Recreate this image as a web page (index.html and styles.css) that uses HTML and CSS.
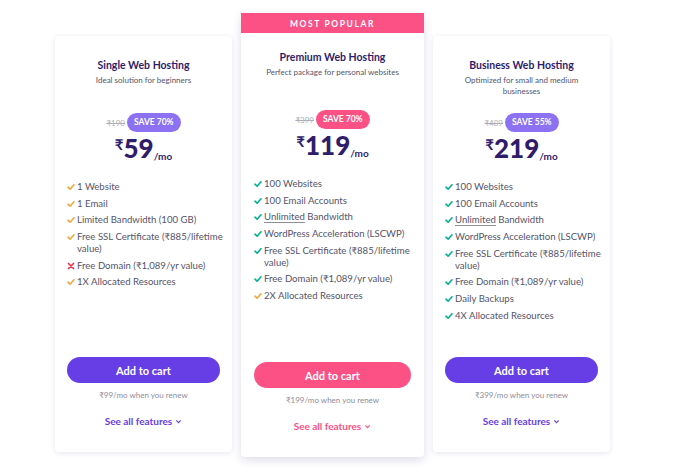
FILE: index.html
```html
<html>

<head>
    <meta charset="utf-8">
    <link rel="stylesheet" href="styles.css">
</head>

<body>
    <div class="plans">

        <!-- single -->
        <div class="plan">
            <div class="plan-head">
                <h3 class="plan-title">Single Web Hosting</h3>
                <p class="plan-tagline">Ideal solution for beginners</p>
            </div>
            <div class="price-box">
                <div class="discount"><s>₹190</s><span class="save">SAVE 70%</span></div>
                <div class="price"><span class="cur">₹</span><span class="amt">59</span><span class="per">/mo</span></div>
            </div>
            <ul class="features">
                <li class="ok-gold"><svg viewBox="0 0 8 8"><path d="M1 4.2 3.1 6.2 7 1.8"/></svg><span>1 Website</span></li>
                <li class="ok-gold"><svg viewBox="0 0 8 8"><path d="M1 4.2 3.1 6.2 7 1.8"/></svg><span>1 Email</span></li>
                <li class="ok-gold"><svg viewBox="0 0 8 8"><path d="M1 4.2 3.1 6.2 7 1.8"/></svg><span>Limited Bandwidth (100 GB)</span></li>
                <li class="ok-gold"><svg viewBox="0 0 8 8"><path d="M1 4.2 3.1 6.2 7 1.8"/></svg><span><span class="nobr">Free SSL Certificate (₹885/lifetime</span> value)</span></li>
                <li class="no"><svg viewBox="0 0 8 8"><path d="M1.5 1.5 6.5 6.5M6.5 1.5 1.5 6.5"/></svg><span>Free Domain (₹1,089/yr value)</span></li>
                <li class="ok-gold"><svg viewBox="0 0 8 8"><path d="M1 4.2 3.1 6.2 7 1.8"/></svg><span>1X Allocated Resources</span></li>
            </ul>
            <div class="plan-foot">
                <button class="cart">Add to cart</button>
                <div class="renew">₹99/mo when you renew</div>
                <a class="see-all">See all features <svg viewBox="0 0 8 8"><path d="M1.5 2.8 4 5.3 6.5 2.8"/></svg></a>
            </div>
        </div>

        <!-- premium -->
        <div class="plan popular">
            <div class="ribbon">MOST POPULAR</div>
            <div class="plan-body">
                <div class="plan-head">
                    <h3 class="plan-title">Premium Web Hosting</h3>
                    <p class="plan-tagline">Perfect package for personal websites</p>
                </div>
                <div class="price-box">
                    <div class="discount"><s>₹399</s><span class="save">SAVE 70%</span></div>
                    <div class="price"><span class="cur">₹</span><span class="amt">119</span><span class="per">/mo</span></div>
                </div>
                <ul class="features">
                    <li class="ok"><svg viewBox="0 0 8 8"><path d="M1 4.2 3.1 6.2 7 1.8"/></svg><span>100 Websites</span></li>
                    <li class="ok"><svg viewBox="0 0 8 8"><path d="M1 4.2 3.1 6.2 7 1.8"/></svg><span>100 Email Accounts</span></li>
                    <li class="ok"><svg viewBox="0 0 8 8"><path d="M1 4.2 3.1 6.2 7 1.8"/></svg><span><u>Unlimited</u> Bandwidth</span></li>
                    <li class="ok"><svg viewBox="0 0 8 8"><path d="M1 4.2 3.1 6.2 7 1.8"/></svg><span>WordPress Acceleration (LSCWP)</span></li>
                    <li class="ok"><svg viewBox="0 0 8 8"><path d="M1 4.2 3.1 6.2 7 1.8"/></svg><span><span class="nobr">Free SSL Certificate (₹885/lifetime</span> value)</span></li>
                    <li class="ok"><svg viewBox="0 0 8 8"><path d="M1 4.2 3.1 6.2 7 1.8"/></svg><span>Free Domain (₹1,089/yr value)</span></li>
                    <li class="ok-gold"><svg viewBox="0 0 8 8"><path d="M1 4.2 3.1 6.2 7 1.8"/></svg><span>2X Allocated Resources</span></li>
                </ul>
                <div class="plan-foot">
                    <button class="cart">Add to cart</button>
                    <div class="renew">₹199/mo when you renew</div>
                    <a class="see-all">See all features <svg viewBox="0 0 8 8"><path d="M1.5 2.8 4 5.3 6.5 2.8"/></svg></a>
                </div>
            </div>
        </div>

        <!-- business -->
        <div class="plan">
            <div class="plan-head">
                <h3 class="plan-title">Business Web Hosting</h3>
                <p class="plan-tagline">Optimized for small and medium businesses</p>
            </div>
            <div class="price-box">
                <div class="discount"><s>₹489</s><span class="save">SAVE 55%</span></div>
                <div class="price"><span class="cur">₹</span><span class="amt">219</span><span class="per">/mo</span></div>
            </div>
            <ul class="features">
                <li class="ok"><svg viewBox="0 0 8 8"><path d="M1 4.2 3.1 6.2 7 1.8"/></svg><span>100 Websites</span></li>
                <li class="ok"><svg viewBox="0 0 8 8"><path d="M1 4.2 3.1 6.2 7 1.8"/></svg><span>100 Email Accounts</span></li>
                <li class="ok"><svg viewBox="0 0 8 8"><path d="M1 4.2 3.1 6.2 7 1.8"/></svg><span><u>Unlimited</u> Bandwidth</span></li>
                <li class="ok"><svg viewBox="0 0 8 8"><path d="M1 4.2 3.1 6.2 7 1.8"/></svg><span>WordPress Acceleration (LSCWP)</span></li>
                <li class="ok"><svg viewBox="0 0 8 8"><path d="M1 4.2 3.1 6.2 7 1.8"/></svg><span><span class="nobr">Free SSL Certificate (₹885/lifetime</span> value)</span></li>
                <li class="ok"><svg viewBox="0 0 8 8"><path d="M1 4.2 3.1 6.2 7 1.8"/></svg><span>Free Domain (₹1,089/yr value)</span></li>
                <li class="ok"><svg viewBox="0 0 8 8"><path d="M1 4.2 3.1 6.2 7 1.8"/></svg><span>Daily Backups</span></li>
                <li class="ok"><svg viewBox="0 0 8 8"><path d="M1 4.2 3.1 6.2 7 1.8"/></svg><span>4X Allocated Resources</span></li>
            </ul>
            <div class="plan-foot">
                <button class="cart">Add to cart</button>
                <div class="renew">₹399/mo when you renew</div>
                <a class="see-all">See all features <svg viewBox="0 0 8 8"><path d="M1.5 2.8 4 5.3 6.5 2.8"/></svg></a>
            </div>
        </div>

    </div>
</body>

</html>
```

FILE: styles.css
```css
body {
    --ink: #2f1c6a;
    --text: #55546a;
    --muted: #8e8d99;
    --purple: #673de6;
    --badge: #8c72f2;
    --pink: #fc5185;
    --green: #00b090;
    --gold: #f0a83a;
    margin: 0;
    background: white;
    font-family: Lato, "Noto Sans", sans-serif;
    color: var(--text);
}

.plans {
    display: flex;
    align-items: flex-start;
    gap: 9px;
    padding: 13px 0 0 55px;
}

/* cards */

.plan {
    box-sizing: border-box;
    display: flex;
    flex-direction: column;
    width: 177px;
    height: 416px;
    margin-top: 23px;
    padding: 22px 11px 24px;
    background: white;
    border-radius: 4px;
    box-shadow: rgb(47 28 106 / 12%) 0px 1px 5px 0px;
}

.plan.popular {
    width: 183px;
    height: 444px;
    margin-top: 0;
    padding: 0;
    border-radius: 0 0 4px 4px;
    box-shadow: rgb(47 28 106 / 16%) 0px 3px 10px 0px;
}

.ribbon {
    height: 20px;
    line-height: 22px;
    text-align: center;
    background: var(--pink);
    color: white;
    font-size: 8.5px;
    font-weight: 700;
    letter-spacing: 1.6px;
}

.plan-body {
    flex: 1;
    display: flex;
    flex-direction: column;
    padding: 17px 12px 24px;
}

/* header */

.plan-head {
    min-height: 55px;
    text-align: center;
}

.popular .plan-head {
    min-height: 60px;
}

.plan-title {
    margin: 0;
    font-size: 10.5px;
    line-height: 14px;
    font-weight: 700;
    color: var(--ink);
}

.plan-tagline {
    margin: 3px 6px 0;
    font-size: 8px;
    line-height: 11px;
    color: var(--text);
}

/* price */

.price-box {
    text-align: center;
}

.discount {
    display: flex;
    justify-content: center;
    align-items: center;
    gap: 2px;
}

.discount s {
    font-size: 8px;
    color: #aeadb8;
}

.save {
    height: 19px;
    line-height: 19px;
    padding: 0 7px;
    border-radius: 10px;
    background: var(--badge);
    color: white;
    font-size: 8.5px;
    font-weight: 700;
}

.popular .save {
    background: var(--pink);
}

.price {
    display: flex;
    justify-content: center;
    align-items: flex-start;
    height: 30px;
    margin-top: 1px;
    color: var(--ink);
    font-weight: 700;
}

.price .cur {
    font-size: 15px;
    line-height: 22px;
}

.price .amt {
    font-size: 26px;
    line-height: 30px;
    font-weight: 900;
}

.price .per {
    align-self: flex-end;
    font-size: 10px;
    line-height: 14px;
}

/* feature list */

.features {
    flex: 1;
    list-style: none;
    margin: 18px 0 0 1px;
    padding: 0;
    font-size: 9.6px;
    line-height: 12px;
}

.features li {
    display: flex;
    gap: 2px;
    margin-bottom: 4.7px;
}

.features .nobr {
    white-space: nowrap;
}

.features svg {
    flex: none;
    width: 8px;
    height: 8px;
    margin-top: 2px;
    fill: none;
    stroke-width: 1.6;
    stroke-linecap: round;
    stroke-linejoin: round;
}

.features .ok svg {
    stroke: var(--green);
}

.features .ok-gold svg {
    stroke: var(--gold);
}

.features .no svg {
    stroke: #f0334a;
    stroke-width: 1.7;
}

.features u {
    text-decoration-color: var(--muted);
    text-underline-offset: 2px;
}

/* footer */

.plan-foot {
    display: flex;
    flex-direction: column;
    align-items: stretch;
    margin: 0 1px;
    text-align: center;
}

.cart {
    height: 26px;
    border: 0;
    border-radius: 13px;
    background: var(--purple);
    color: white;
    font-family: inherit;
    font-size: 11px;
    font-weight: 700;
}

.popular .cart {
    background: var(--pink);
}

.renew {
    margin-top: 7px;
    font-size: 8px;
    line-height: 11px;
    color: var(--muted);
}

.see-all {
    display: flex;
    justify-content: center;
    align-items: center;
    gap: 3px;
    margin-top: 13px;
    font-size: 10px;
    line-height: 14px;
    font-weight: 700;
    color: var(--purple);
}

.popular .see-all {
    color: var(--pink);
}

.see-all svg {
    width: 7px;
    height: 7px;
    fill: none;
    stroke: currentColor;
    stroke-width: 1.3;
}
```
